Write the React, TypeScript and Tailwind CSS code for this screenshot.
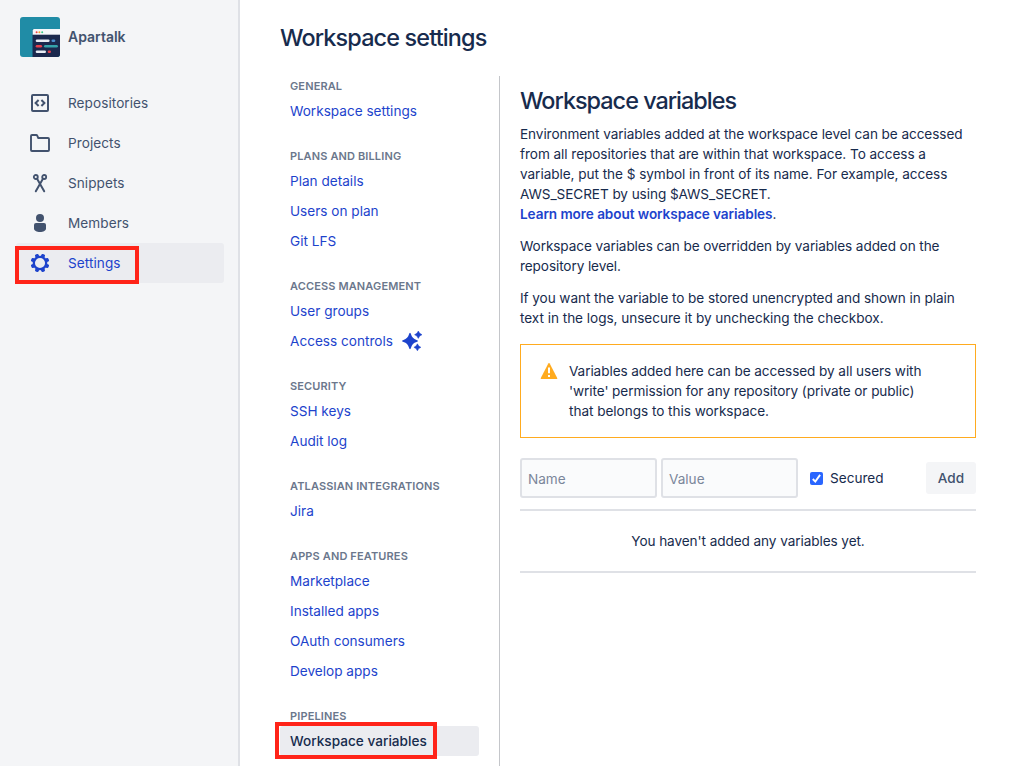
import React from "react";

type Item = { label: string; sparkle?: boolean; active?: boolean };
type Group = { title: string; items: Item[] };

const groups: Group[] = [
  { title: "GENERAL", items: [{ label: "Workspace settings" }] },
  { title: "PLANS AND BILLING", items: [{ label: "Plan details" }, { label: "Users on plan" }, { label: "Git LFS" }] },
  { title: "ACCESS MANAGEMENT", items: [{ label: "User groups" }, { label: "Access controls", sparkle: true }] },
  { title: "SECURITY", items: [{ label: "SSH keys" }, { label: "Audit log" }] },
  { title: "ATLASSIAN INTEGRATIONS", items: [{ label: "Jira" }] },
  {
    title: "APPS AND FEATURES",
    items: [{ label: "Marketplace" }, { label: "Installed apps" }, { label: "OAuth consumers" }, { label: "Develop apps" }],
  },
  { title: "PIPELINES", items: [{ label: "Workspace variables", active: true }] },
];

function Logo() {
  return (
    <svg width="40" height="40" viewBox="0 0 40 40" className="shrink-0 rounded-[3px]">
      <rect width="40" height="40" fill="#208ca6" />
      <path d="M12 14a2 2 0 0 1 2-2h26v28H12z" fill="#1a7391" />
      <path d="M12.700 18v-4.500a1.500 1.500 0 0 1 1.500-1.500H40v6z" fill="#f5f7fa" />
      <rect x="12.700" y="17.700" width="27.300" height="22.300" fill="#1b294e" />
      <circle cx="16.600" cy="15.300" r="1" fill="#ef4444" />
      <circle cx="19.400" cy="15.300" r="1" fill="#f5a623" />
      <circle cx="22.200" cy="15.300" r="1" fill="#34c98b" />
      <g strokeWidth="2.600" strokeLinecap="round">
        <path d="M17 23.700h11.300" stroke="#e8edf5" />
        <path d="M32.800 23.700h1.200" stroke="#4a90d0" />
        <path d="M17 29.300h3.800" stroke="#e5404c" />
        <path d="M25.300 29.300h11.300" stroke="#35a3ab" />
        <path d="M17 34.800h7.700" stroke="#e8edf5" />
        <path d="M29 34.800h.7" stroke="#e5404c" />
      </g>
    </svg>
  );
}

const RepoIcon = () => (
  <svg width="24" height="24" viewBox="0 0 24 24" fill="none" stroke="currentColor" strokeWidth="2">
    <rect x="4" y="4" width="16" height="16" rx="1" />
    <path d="M10.600 9 7.600 12l3 3M13.400 9l3 3-3 3" strokeWidth="2" />
  </svg>
);
const FolderIcon = () => (
  <svg width="24" height="24" viewBox="0 0 24 24" fill="none" stroke="currentColor" strokeWidth="1.900" strokeLinejoin="round">
    <path d="M3 5a1 1 0 0 1 1-1h4.300a1 1 0 0 1 .9.600L10.300 7H20a1 1 0 0 1 1 1v11a1 1 0 0 1-1 1H4a1 1 0 0 1-1-1z" />
  </svg>
);
const SnippetsIcon = () => (
  <svg width="24" height="24" viewBox="0 0 24 24" fill="none" stroke="currentColor" strokeWidth="1.800" strokeLinecap="round">
    <circle cx="7.800" cy="6" r="2" />
    <circle cx="16.200" cy="6" r="2" />
    <path d="M9.200 8 16.200 20.300M14.800 8 7.800 20.300" strokeWidth="2" />
  </svg>
);
const MemberIcon = () => (
  <svg width="24" height="24" viewBox="0 0 24 24" fill="currentColor">
    <circle cx="12" cy="7" r="4" />
    <path d="M6 14a2 2 0 0 1 2-2h8a2 2 0 0 1 2 2v3.500c0 2.300-2.700 3.500-6 3.500s-6-1.200-6-3.500z" />
  </svg>
);
const gearTeeth = [22.5, 67.5, 112.5, 157.5, 202.5, 247.5, 292.5, 337.5];
const GearIcon = () => (
  <svg width="24" height="24" viewBox="0 0 24 24" fill="currentColor">
    <circle cx="12" cy="12" r="6.200" fill="none" stroke="currentColor" strokeWidth="2.300" />
    {gearTeeth.map((a) => (
      <rect key={a} x="10.100" y="2.600" width="3.800" height="3.600" rx="1.200" transform={`rotate(${a} 12 12)`} />
    ))}
  </svg>
);
const Sparkle = () => (
  <svg width="22" height="22" viewBox="0 0 22 22" fill="#1d43cc" className="ml-2">
    <path d="M9 2.800Q9.700 3 10 4.300Q11.200 8.600 15.500 9.900Q17 10.400 17 11Q17 11.600 15.500 12.100Q11.200 13.400 10 17.700Q9.700 19 9 19.200Q8.300 19 8 17.700Q6.800 13.400 2.500 12.100Q1 11.600 1 11Q1 10.400 2.500 9.900Q6.800 8.600 8 4.300Q8.300 3 9 2.800z" />
    <path d="M17.300 1Q18.200 3.800 21 4.700Q18.200 5.600 17.300 8.400Q16.400 5.600 13.600 4.700Q16.400 3.800 17.300 1z" stroke="#1d43cc" strokeWidth=".5" />
    <path d="M16.400 13.800Q17.300 16.400 19.900 17.300Q17.300 18.200 16.400 20.800Q15.500 18.200 12.900 17.300Q15.500 16.400 16.400 13.800z" stroke="#1d43cc" strokeWidth=".5" />
  </svg>
);

const side = [
  { label: "Repositories", Icon: RepoIcon },
  { label: "Projects", Icon: FolderIcon },
  { label: "Snippets", Icon: SnippetsIcon },
  { label: "Members", Icon: MemberIcon },
  { label: "Settings", Icon: GearIcon, active: true },
];

export default function App() {
  return (
    <div className="flex h-[766px] w-[1010px] overflow-hidden bg-white font-['Inter',sans-serif] text-[13.6px] leading-5 text-[#172b4d]">
      <aside className="w-60 shrink-0 border-r-2 border-[#dfe1e6] bg-[#f4f5f7] pt-[17px] text-[#42526e]">
        <div className="flex items-center gap-2 pl-5">
          <Logo />
          <span className="text-[14px] font-semibold">Apartalk</span>
        </div>
        <nav className="mt-[26px] flex flex-col px-4 pr-[14px] tracking-[0.06px]">
          {side.map(({ label, Icon, active }) => (
            <div
              key={label}
              className={`relative flex h-10 items-center gap-4 rounded-[3px] pl-3 ${active ? "bg-[#ebecf0] text-[#1d43cc]" : ""}`}
            >
              <Icon />
              <span>{label}</span>
              {active && <div className="absolute top-[3px] -left-px h-[38px] w-[124px] border-4 border-[#ff2419]" />}
            </div>
          ))}
        </nav>
      </aside>

      <main className="flex-1 pl-10">
        <h1 className="mt-6 h-7 text-[23.4px] leading-7 font-medium tracking-[-0.84px]">Workspace settings</h1>
        <div className="mt-6 flex h-[690px]">
          <nav className="w-[220px] shrink-0 border-r border-[#c4c6ca]">
            {groups.map((g) => (
              <section key={g.title} className="mb-5">
                <h3 className="pl-[10px] text-[11px] leading-5 font-semibold tracking-[0.13px] text-[#6b778c]">{g.title}</h3>
                {g.items.map((it) => (
                  <div
                    key={it.label}
                    className={`relative mr-5 flex h-[30px] items-center rounded-[3px] pl-[10px] ${it.active ? "bg-[#ebecf0] font-medium tracking-[0.02px]" : "text-[#1d43cc]"}`}
                  >
                    <span>{it.label}</span>
                    {it.sparkle && <Sparkle />}
                    {it.active && <div className="absolute -top-1 -left-[5px] h-[37px] w-[162px] border-4 border-[#ff2419]" />}
                  </div>
                ))}
              </section>
            ))}
          </nav>

          <section className="ml-5 w-[456px] pt-[11px] tracking-[-0.08px]">
            <h2 className="text-[23.4px] leading-7 font-medium tracking-[-0.98px]">Workspace variables</h2>
            <p className="mt-[9px] whitespace-nowrap">
              Environment variables added at the workspace level can be accessed
              <br />
              <span className="tracking-[-0.06px]">from all repositories that are within that workspace. To access a</span>
              <br />
              <span className="tracking-[-0.05px]">variable, put the $ symbol in front of its name. For example, access</span>
              <br />
              AWS_SECRET by using $AWS_SECRET.
              <br />
              <a className="font-semibold text-[#1d43cc]">Learn more about workspace variables</a>.
            </p>
            <p className="mt-3 tracking-[-0.1px] whitespace-nowrap">
              Workspace variables can be overridden by variables added on the
              <br />
              repository level.
            </p>
            <p className="mt-3 whitespace-nowrap">
              If you want the variable to be stored unencrypted and shown in plain
              <br />
              <span className="tracking-[-0.04px]">text in the logs, unsecure it by unchecking the checkbox.</span>
            </p>

            <div className="mt-4 flex h-[94px] border border-[#ffab1f] pt-4 pl-4">
              <svg width="24" height="24" viewBox="0 0 24 24" className="shrink-0">
                <path d="M11.300 2.400a.8.800 0 0 1 1.400 0l7.500 14.500c.3.600 0 1.100-.7 1.100h-15c-.7 0-1-.5-.7-1.100z" fill="#ffab1f" />
                <path d="M12 6.500v5.700M12 14v2" stroke="#fff" strokeWidth="2" />
              </svg>
              <p className="ml-2 whitespace-nowrap">
                Variables added here can be accessed by all users with
                <br />
                'write' permission for any repository (private or public)
                <br />
                <span className="tracking-[-0.04px]">that belongs to this workspace.</span>
              </p>
            </div>

            <div className="mt-5 flex h-10 items-center tracking-normal">
              <div className="flex h-10 w-[137px] items-center rounded-[3px] border-2 border-[#dfe1e6] bg-[#fafbfc] pt-0.5 pl-1.5 text-[#7a869a]">Name</div>
              <div className="ml-1 flex h-10 w-[137px] items-center rounded-[3px] border-2 border-[#dfe1e6] bg-[#fafbfc] pt-0.5 pl-1.5 text-[#7a869a]">Value</div>
              <svg width="13" height="13" viewBox="0 0 13 13" className="ml-3">
                <rect width="13" height="13" rx="2" fill="#2a66ff" />
                <path d="m2.800 7 2.500 2.600 4.800-6.700" fill="none" stroke="#fff" strokeWidth="1.900" />
              </svg>
              <span className="ml-[7px]">Secured</span>
              <button className="ml-auto h-8 w-[50px] rounded-[3px] bg-[#f4f5f7] font-medium text-[#42526e]">Add</button>
            </div>
            <div className="mt-[11px] flex h-16 items-center justify-center border-y-2 border-[#dfe1e6]">
              You haven't added any variables yet.
            </div>
          </section>
        </div>
      </main>
    </div>
  );
}
